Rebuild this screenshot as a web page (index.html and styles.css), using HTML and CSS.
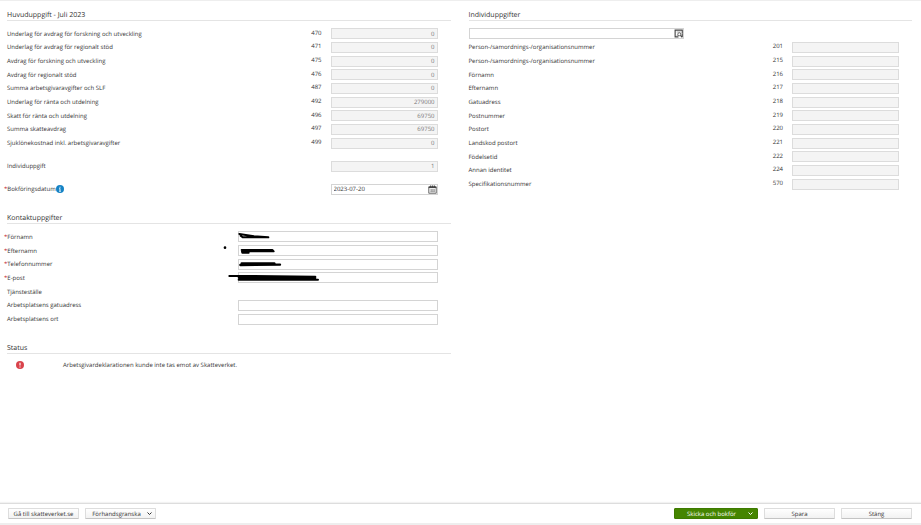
FILE: index.html
```
<!DOCTYPE html>
<html lang="sv">
<head>
    <meta charset="UTF-8">
    <meta name="viewport" content="width=device-width, initial-scale=1.0">
    <title>Arbetsgivardeklaration</title>
    <link rel="stylesheet" href="styles.css">
</head>
<body>

<main class="columns">
    <div class="column">
        <section>
            <h2>Huvuduppgift - Juli 2023</h2>
            <div class="rows rows-main">
                <div class="row"><label for="f470">Underlag för avdrag för forskning och utveckling</label><span class="code">470</span><input type="text" id="f470" value="0" disabled></div>
                <div class="row"><label for="f471">Underlag för avdrag för regionalt stöd</label><span class="code">471</span><input type="text" id="f471" value="0" disabled></div>
                <div class="row"><label for="f475">Avdrag för forskning och utveckling</label><span class="code">475</span><input type="text" id="f475" value="0" disabled></div>
                <div class="row"><label for="f476">Avdrag för regionalt stöd</label><span class="code">476</span><input type="text" id="f476" value="0" disabled></div>
                <div class="row"><label for="f487">Summa arbetsgivaravgifter och SLF</label><span class="code">487</span><input type="text" id="f487" value="0" disabled></div>
                <div class="row"><label for="f492">Underlag för ränta och utdelning</label><span class="code">492</span><input type="text" id="f492" value="279000" disabled></div>
                <div class="row"><label for="f496">Skatt för ränta och utdelning</label><span class="code">496</span><input type="text" id="f496" value="69750" disabled></div>
                <div class="row"><label for="f497">Summa skatteavdrag</label><span class="code">497</span><input type="text" id="f497" value="69750" disabled></div>
                <div class="row"><label for="f499">Sjuklönekostnad inkl. arbetsgivaravgifter</label><span class="code">499</span><input type="text" id="f499" value="0" disabled></div>
            </div>
            <div class="row row-single"><label for="individ">Individuppgift</label><input type="text" id="individ" value="1" disabled></div>
            <div class="row row-single">
                <label class="required" for="datum">Bokföringsdatum</label>
                <svg class="info" viewBox="0 0 14 14" aria-hidden="true">
                    <circle cx="7" cy="7" r="7" fill="#1583c5"/>
                    <path d="M7 3v2M7 6v5M5.500 11h3M5.500 6.500h1.500" stroke="#fff" stroke-width="1.500"/>
                </svg>
                <div class="field">
                    <input type="text" id="datum" value="2023-07-20">
                    <button type="button" class="icon-btn" aria-label="Välj datum">
                        <svg viewBox="0 0 24 24" fill="none" stroke="#444" stroke-width="2">
                            <path d="M2 5h20v17H2z" fill="#eee"/>
                            <path d="M2 6h20" stroke-width="4"/>
                            <path d="M7 1v6M12 1v6M17 1v6" stroke-width="3"/>
                            <path d="M6 13h12M6 17h12M9 11v8M13 11v8M17 11v8" stroke="#999"/>
                        </svg>
                    </button>
                </div>
            </div>
        </section>

        <section>
            <h2>Kontaktuppgifter</h2>
            <div class="rows rows-contact">
                <div class="row"><label class="required" for="fornamn">Förnamn</label><input type="text" id="fornamn"></div>
                <div class="row"><label class="required" for="efternamn">Efternamn</label><input type="text" id="efternamn"></div>
                <div class="row"><label class="required" for="telefon">Telefonnummer</label><input type="text" id="telefon"></div>
                <div class="row"><label class="required" for="epost">E-post</label><input type="text" id="epost"></div>
                <div class="row"><span>Tjänsteställe</span></div>
                <div class="row"><label for="gatuadress">Arbetsplatsens gatuadress</label><input type="text" id="gatuadress"></div>
                <div class="row"><label for="ort">Arbetsplatsens ort</label><input type="text" id="ort"></div>
                <!-- marker strokes over the personal data -->
                <svg class="marker" viewBox="0 0 360 180" fill="none" stroke="#000" stroke-linecap="round" stroke-linejoin="round" aria-hidden="true">
                    <path d="M58 27L82 31L102 34L145 37L68 37L62 32" stroke-width="6"/>
                    <circle cx="15" cy="68" r="4" fill="#000" stroke="none"/>
                    <path d="M65 75L157 75L161 79L66 79L67 83L86 83" stroke-width="6"/>
                    <path d="M65 115L163 115M61 120L180 119" stroke-width="7"/>
                    <path d="M28 153L80 153L286 155" stroke-width="6"/>
                    <path d="M56 158L286 159M56 164L294 164" stroke-width="6"/>
                </svg>
            </div>
        </section>

        <section>
            <h2>Status</h2>
            <div class="status">
                <svg class="error" viewBox="0 0 14 14" aria-hidden="true">
                    <circle cx="7" cy="7" r="7" fill="#d9434b"/>
                    <path d="M7 3v5M7 9.500v2" stroke="#fff" stroke-width="2"/>
                </svg>
                <span>Arbetsgivardeklarationen kunde inte tas emot av Skatteverket.</span>
            </div>
        </section>
    </div>

    <div class="column">
        <section>
            <h2>Individuppgifter</h2>
            <div class="rows rows-person">
                <div class="row">
                    <div class="field field-search">
                        <input type="text" id="sok" aria-label="Individ">
                        <button type="button" class="icon-btn" aria-label="Sök individ">
                            <svg viewBox="0 0 24 24" fill="none" stroke="#444" stroke-width="2">
                                <path d="M22 12V3H3v18h9M3 3v18" stroke-width="3"/>
                                <path d="M7 8h11M7 17h4" stroke="#888"/>
                                <circle cx="14" cy="14" r="4"/>
                                <path d="M17 17l5 5M22 12v10" stroke-width="3"/>
                            </svg>
                        </button>
                    </div>
                </div>
                <div class="row"><label for="f201">Person-/samordnings-/organisationsnummer</label><span class="code">201</span><input type="text" id="f201" disabled></div>
                <div class="row"><label for="f215">Person-/samordnings-/organisationsnummer</label><span class="code">215</span><input type="text" id="f215" disabled></div>
                <div class="row"><label for="f216">Förnamn</label><span class="code">216</span><input type="text" id="f216" disabled></div>
                <div class="row"><label for="f217">Efternamn</label><span class="code">217</span><input type="text" id="f217" disabled></div>
                <div class="row"><label for="f218">Gatuadress</label><span class="code">218</span><input type="text" id="f218" disabled></div>
                <div class="row"><label for="f219">Postnummer</label><span class="code">219</span><input type="text" id="f219" disabled></div>
                <div class="row"><label for="f220">Postort</label><span class="code">220</span><input type="text" id="f220" disabled></div>
                <div class="row"><label for="f221">Landskod postort</label><span class="code">221</span><input type="text" id="f221" disabled></div>
                <div class="row"><label for="f222">Födelsetid</label><span class="code">222</span><input type="text" id="f222" disabled></div>
                <div class="row"><label for="f224">Annan identitet</label><span class="code">224</span><input type="text" id="f224" disabled></div>
                <div class="row"><label for="f570">Specifikationsnummer</label><span class="code">570</span><input type="text" id="f570" disabled></div>
            </div>
        </section>
    </div>
</main>

<footer>
    <button type="button" class="btn">Gå till skatteverket.se</button>
    <button type="button" class="btn btn-menu">
        <span>Förhandsgranska</span>
        <svg class="chevron" viewBox="0 0 10 10" aria-hidden="true"><path d="M1 3l4 4l4-4" fill="none" stroke="currentColor" stroke-width="2"/></svg>
    </button>
    <button type="button" class="btn btn-menu btn-primary">
        <span>Skicka och bokför</span>
        <svg class="chevron" viewBox="0 0 10 10" aria-hidden="true"><path d="M1 3l4 4l4-4" fill="none" stroke="currentColor" stroke-width="2"/></svg>
    </button>
    <button type="button" class="btn">Spara</button>
    <button type="button" class="btn">Stäng</button>
</footer>

</body>
</html>
```

FILE: styles.css
```
* {
    box-sizing: border-box;
}
body {
    display: flex;
    flex-direction: column;
    min-height: 100vh;
    margin: 0;
    border-top: 1px solid #eee;
    border-bottom: 2px solid #eee;
    background-color: #fff;
    color: #333;
    font-family: 'Open Sans', 'Noto Sans', sans-serif;
    font-size: 6px;
    line-height: 8px;
    text-rendering: geometricPrecision;
}
input, button {
    font: inherit;
    color: inherit;
    text-rendering: inherit;
}
.columns {
    flex: 1;
    display: grid;
    grid-template-columns: 1fr 1fr;
    gap: 18px;
    padding: 9px 9px 9px 7px;
}
section {
    margin-bottom: 17px;
}
h2 {
    margin: 0 0 6px;
    padding-top: 1px;
    border-bottom: 1px solid #e4e4e4;
    font-size: 7px;
    font-weight: normal;
    line-height: 9px;
}
.rows {
    position: relative;
    display: grid;
    grid-auto-rows: 1fr;
    padding-right: 13px;
}
.rows-main {
    min-height: 123px;
}
.rows-contact {
    min-height: 96px;
}
.rows-person {
    min-height: 164px;
}
.row {
    display: flex;
    align-items: center;
}
.row-single {
    min-height: 14px;
    margin-top: 9px;
    padding-right: 13px;
}
.code {
    margin-left: auto;
    padding: 0 9px 2px 0;
}
.row input {
    width: 107px;
    height: 11px;
    margin-left: auto;
    padding: 0 2px;
    border: 1px solid #d4d4d4;
    background-color: #fff;
}
.row .code + input {
    margin-left: 0;
}
.row input:disabled {
    border-color: #dcdcdc;
    background-color: #f4f4f4;
    color: #777;
    text-align: right;
}
.rows-contact input {
    width: 200px;
}
.required::before {
    content: "*";
    margin-left: -3px;
    color: #c0202a;
}
.info, .error {
    width: 8px;
    height: 8px;
}
.field {
    position: relative;
    width: 107px;
    margin-left: auto;
}
.field input {
    display: block;
    width: 100%;
}
.field-search {
    width: 215px;
    margin-left: 0;
}
.icon-btn {
    position: absolute;
    top: 1px;
    right: 1px;
    width: 9px;
    height: 9px;
    padding: 0;
    border: none;
    background: none;
    cursor: pointer;
}
.icon-btn svg {
    display: block;
    width: 100%;
    height: 100%;
}
.marker {
    position: absolute;
    top: -5px;
    right: 111px;
    width: 120px;
    height: 60px;
    pointer-events: none;
}
.status {
    display: flex;
    align-items: center;
    gap: 39px;
    padding: 1px 9px;
}
footer {
    display: flex;
    gap: 6px;
    padding: 4px 9px 4px 8px;
    border-top: 1px solid #ddd;
    box-shadow: 0 -1px 1px #f2f2f2;
}
.btn {
    width: 71px;
    height: 11px;
    padding: 0;
    border: 1px solid #ddd;
    border-bottom-color: #c4c4c4;
    border-radius: 1px;
    background: linear-gradient(#fff, #f2f2f2);
    line-height: 8px;
    text-align: center;
    cursor: pointer;
}
.btn-menu {
    display: flex;
    align-items: center;
    padding: 0 3px 0 0;
}
.btn-menu span {
    flex: 1;
}
.chevron {
    width: 5px;
    height: 5px;
}
.btn-primary {
    width: 84px;
    margin-left: auto;
    padding-right: 4px;
    border-color: #3d7a00;
    background: #458500;
    color: #fff;
}
```
